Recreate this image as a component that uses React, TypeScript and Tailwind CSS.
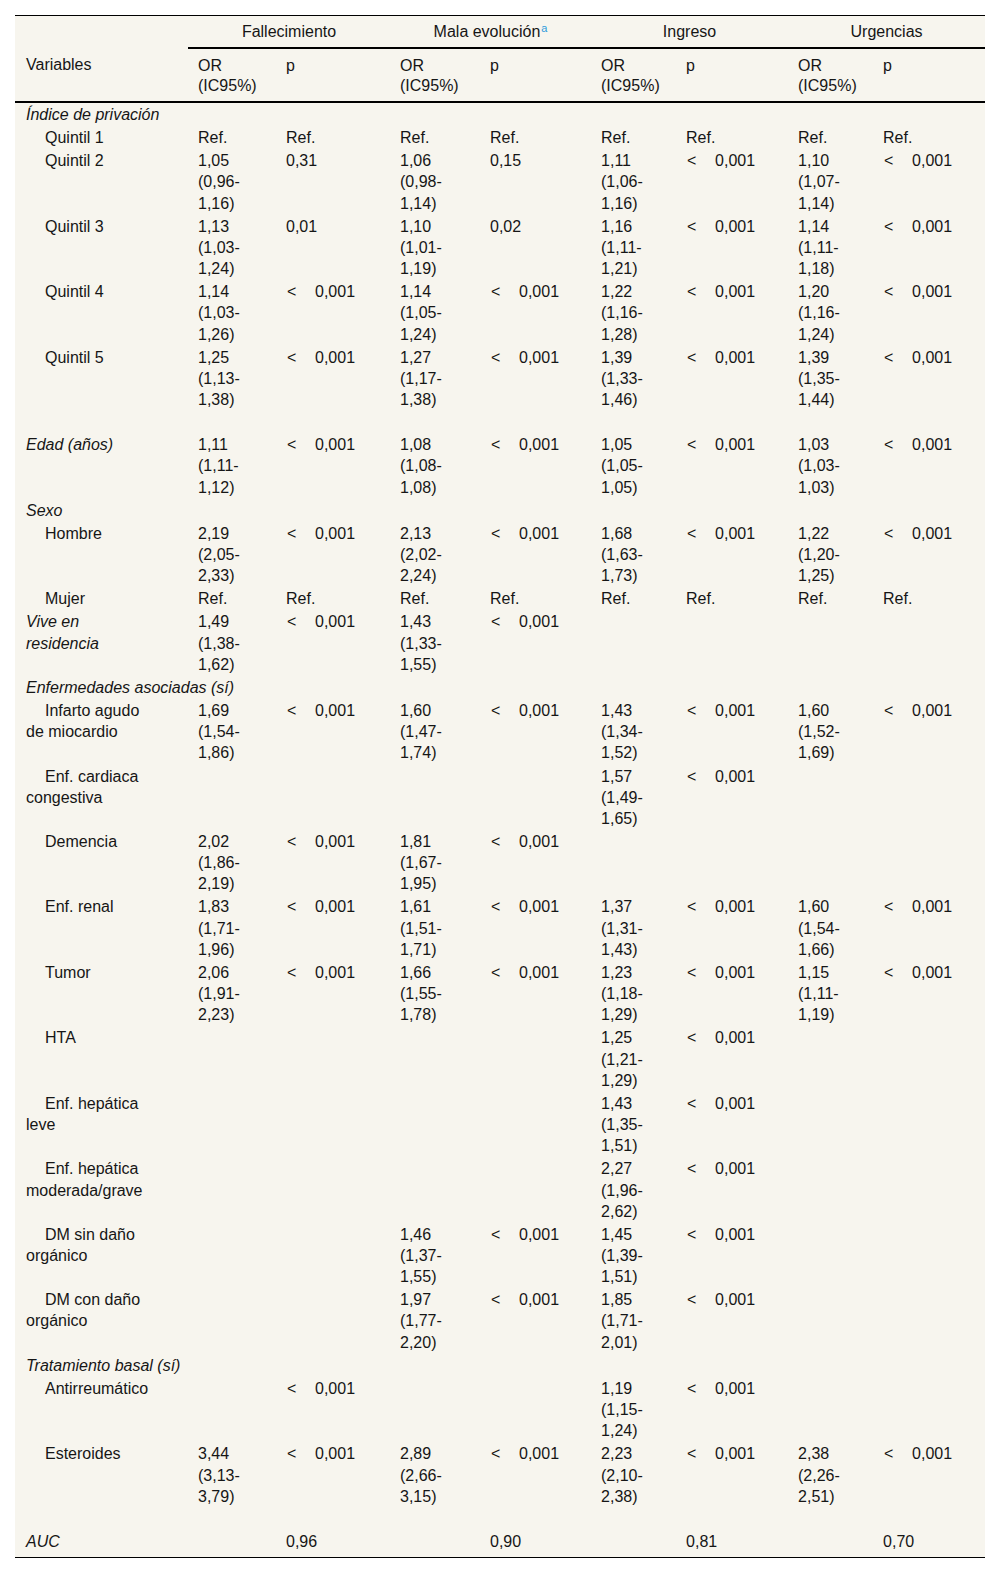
type Kind = "cat" | "item" | "top" | "blank";

type Row = {
  kind: Kind;
  label?: string;
  cells?: string[];
};

const REF = ["Ref.", "Ref.", "Ref.", "Ref.", "Ref.", "Ref.", "Ref.", "Ref."];
const E = "";
const LT = "<";

const rows: Row[] = [
  { kind: "cat", label: "Índice de privación" },
  { kind: "item", label: "Quintil 1", cells: REF },
  {
    kind: "item",
    label: "Quintil 2",
    cells: ["1,05 (0,96-1,16)", "0,31", "1,06 (0,98-1,14)", "0,15", "1,11 (1,06-1,16)", LT, "1,10 (1,07-1,14)", LT],
  },
  {
    kind: "item",
    label: "Quintil 3",
    cells: ["1,13 (1,03-1,24)", "0,01", "1,10 (1,01-1,19)", "0,02", "1,16 (1,11-1,21)", LT, "1,14 (1,11-1,18)", LT],
  },
  {
    kind: "item",
    label: "Quintil 4",
    cells: ["1,14 (1,03-1,26)", LT, "1,14 (1,05-1,24)", LT, "1,22 (1,16-1,28)", LT, "1,20 (1,16-1,24)", LT],
  },
  {
    kind: "item",
    label: "Quintil 5",
    cells: ["1,25 (1,13-1,38)", LT, "1,27 (1,17-1,38)", LT, "1,39 (1,33-1,46)", LT, "1,39 (1,35-1,44)", LT],
  },
  { kind: "blank" },
  {
    kind: "top",
    label: "Edad (años)",
    cells: ["1,11 (1,11-1,12)", LT, "1,08 (1,08-1,08)", LT, "1,05 (1,05-1,05)", LT, "1,03 (1,03-1,03)", LT],
  },
  { kind: "cat", label: "Sexo" },
  {
    kind: "item",
    label: "Hombre",
    cells: ["2,19 (2,05-2,33)", LT, "2,13 (2,02-2,24)", LT, "1,68 (1,63-1,73)", LT, "1,22 (1,20-1,25)", LT],
  },
  { kind: "item", label: "Mujer", cells: REF },
  {
    kind: "top",
    label: "Vive en\nresidencia",
    cells: ["1,49 (1,38-1,62)", LT, "1,43 (1,33-1,55)", LT, E, E, E, E],
  },
  { kind: "cat", label: "Enfermedades asociadas (sí)" },
  {
    kind: "item",
    label: "Infarto agudo\nde miocardio",
    cells: ["1,69 (1,54-1,86)", LT, "1,60 (1,47-1,74)", LT, "1,43 (1,34-1,52)", LT, "1,60 (1,52-1,69)", LT],
  },
  {
    kind: "item",
    label: "Enf. cardiaca\ncongestiva",
    cells: [E, E, E, E, "1,57 (1,49-1,65)", LT, E, E],
  },
  {
    kind: "item",
    label: "Demencia",
    cells: ["2,02 (1,86-2,19)", LT, "1,81 (1,67-1,95)", LT, E, E, E, E],
  },
  {
    kind: "item",
    label: "Enf. renal",
    cells: ["1,83 (1,71-1,96)", LT, "1,61 (1,51-1,71)", LT, "1,37 (1,31-1,43)", LT, "1,60 (1,54-1,66)", LT],
  },
  {
    kind: "item",
    label: "Tumor",
    cells: ["2,06 (1,91-2,23)", LT, "1,66 (1,55-1,78)", LT, "1,23 (1,18-1,29)", LT, "1,15 (1,11-1,19)", LT],
  },
  { kind: "item", label: "HTA", cells: [E, E, E, E, "1,25 (1,21-1,29)", LT, E, E] },
  {
    kind: "item",
    label: "Enf. hepática\nleve",
    cells: [E, E, E, E, "1,43 (1,35-1,51)", LT, E, E],
  },
  {
    kind: "item",
    label: "Enf. hepática\nmoderada/grave",
    cells: [E, E, E, E, "2,27 (1,96-2,62)", LT, E, E],
  },
  {
    kind: "item",
    label: "DM sin daño\norgánico",
    cells: [E, E, "1,46 (1,37-1,55)", LT, "1,45 (1,39-1,51)", LT, E, E],
  },
  {
    kind: "item",
    label: "DM con daño\norgánico",
    cells: [E, E, "1,97 (1,77-2,20)", LT, "1,85 (1,71-2,01)", LT, E, E],
  },
  { kind: "cat", label: "Tratamiento basal (sí)" },
  {
    kind: "item",
    label: "Antirreumático",
    cells: [E, LT, E, E, "1,19 (1,15-1,24)", LT, E, E],
  },
  {
    kind: "item",
    label: "Esteroides",
    cells: ["3,44 (3,13-3,79)", LT, "2,89 (2,66-3,15)", LT, "2,23 (2,10-2,38)", LT, "2,38 (2,26-2,51)", LT],
  },
  { kind: "blank" },
  { kind: "top", label: "AUC", cells: [E, "0,96", E, "0,90", E, "0,81", E, "0,70"] },
];

const groups = ["Fallecimiento", "Mala evolución", "Ingreso", "Urgencias"];

// split "1,05 (0,96-1,16)" into three lines
const OrValue = ({ value }: { value: string }) => {
  if (!value.includes("(")) return <>{value}</>;
  const [est, ci] = value.split(" ");
  const dash = ci.indexOf("-");
  return (
    <>
      {est}
      <br />
      {ci.slice(0, dash + 1)}
      <br />
      {ci.slice(dash + 1)}
    </>
  );
};

const PValue = ({ value }: { value: string }) => {
  if (value !== LT) return <>{value}</>;
  return (
    <>
      <span className="inline-block w-[29px] pl-[1px]">&lt;</span>0,001
    </>
  );
};

const Label = ({ text }: { text: string }) => {
  const parts = text.split("\n");
  return (
    <>
      {parts.map((p, i) => (
        <span key={i}>
          {i > 0 && <br />}
          {p}
        </span>
      ))}
    </>
  );
};

const App = () => {
  return (
    <div className="min-h-[1574px] bg-white px-[15px] pt-[15px] font-['Liberation_Sans',Arial,sans-serif] text-[16px] text-[#161616]">
      <table className="w-[970px] table-fixed border-collapse border-t border-black bg-[#f7f5ee]">
        <colgroup>
          <col className="w-[173px]" />
          <col className="w-[88px]" />
          <col className="w-[114px]" />
          <col className="w-[90px]" />
          <col className="w-[111px]" />
          <col className="w-[85px]" />
          <col className="w-[112px]" />
          <col className="w-[85px]" />
          <col className="w-[112px]" />
        </colgroup>
        <thead>
          <tr className="leading-[21px]">
            <th className="py-[5px]" />
            {groups.map((g) => (
              <th
                key={g}
                colSpan={2}
                className="border-b-2 border-black py-[5px] text-center font-normal"
              >
                {g}
                {g === "Mala evolución" && (
                  <sup className="ml-[1px] text-[11px] text-[#2f9bdc]">a</sup>
                )}
              </th>
            ))}
          </tr>
          <tr className="border-b-2 border-black text-left align-top leading-[20px]">
            <th className="pt-[7px] pb-[5px] pl-[11px] pr-[10px] font-normal">Variables</th>
            {groups.map((g) => [
              <th key={g + "or"} className="px-[10px] pt-[7px] pb-[5px] font-normal">
                OR
                <br />
                (IC95%)
              </th>,
              <th key={g + "p"} className="px-[10px] pt-[7px] pb-[5px] font-normal">
                p
              </th>,
            ])}
          </tr>
        </thead>
        <tbody>
          {rows.map((row, i) => {
            const last = i === rows.length - 1;
            const pad = last ? "pt-[1px] pb-[5px]" : "py-[1px]";
            const lineCls = `align-top leading-[21.15px] ${last ? "border-b border-black" : ""}`;
            if (row.kind === "blank") {
              return (
                <tr key={i} className="align-top leading-[22px]">
                  <td colSpan={9} className="p-0">
                    &nbsp;
                  </td>
                </tr>
              );
            }
            if (row.kind === "cat") {
              return (
                <tr key={i} className={lineCls}>
                  <td colSpan={9} className={`${pad} pl-[11px] italic`}>
                    {row.label}
                  </td>
                </tr>
              );
            }
            return (
              <tr key={i} className={lineCls}>
                <td
                  className={`${pad} pl-[11px] pr-[10px] ${
                    row.kind === "item" ? "indent-[19px]" : "italic"
                  }`}
                >
                  <Label text={row.label ?? ""} />
                </td>
                {(row.cells ?? []).map((c, j) => (
                  <td key={j} className={`${pad} px-[10px] whitespace-nowrap`}>
                    {j % 2 === 0 ? <OrValue value={c} /> : <PValue value={c} />}
                  </td>
                ))}
              </tr>
            );
          })}
        </tbody>
      </table>
    </div>
  );
};

export default App;
